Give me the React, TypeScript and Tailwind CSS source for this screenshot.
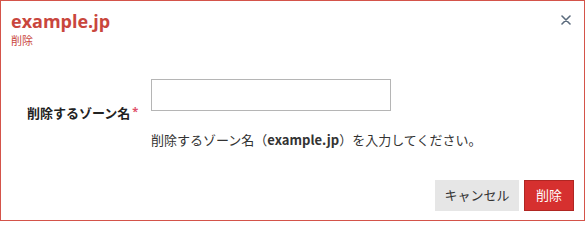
import React from "react";

export default function App() {
  const jp = { fontFamily: '"Open Sans", "Noto Sans CJK JP", sans-serif' };
  return (
    <div
      className="relative w-[585px] h-[221px] bg-white border border-[#d4544a] flex flex-col"
      style={jp}
    >
      <div className="pl-[10px] pt-[9px]">
        <div className="text-[18px] leading-[22px] font-bold text-[#c9463d]">example.jp</div>
        <div className="text-[11px] leading-[18px] text-[#c9463d]">削除</div>
      </div>
      <button className="absolute top-[13px] right-[12px] w-[12px] h-[12px] flex items-center justify-center">
        <svg width="10" height="10" viewBox="0 0 10 10">
          <path d="M1 1 L9 9 M9 1 L1 9" stroke="#5b6b7d" strokeWidth="1.6" strokeLinecap="round" />
        </svg>
      </button>
      <div className="mt-[29px] pl-[26px] flex items-center">
        <div className="w-[124px] text-[13px] font-bold text-[#222] flex items-start">
          削除するゾーン名<span className="text-[#e0506a] text-[11px] ml-[2px] -mt-[1px]">*</span>
        </div>
        <div className="flex flex-col">
          <input className="w-[240px] h-[32px] border border-[#b5b5b5] bg-white outline-none px-2 text-[13px]" />
          <div
            className="mt-[20px] text-[13px] leading-[18px] text-[#333]"
            style={{ fontFamily: '"Noto Sans CJK JP", "Open Sans", sans-serif' }}
          >
            削除するゾーン名（<span className="font-bold">example.jp</span>）を入力してください。
          </div>
        </div>
      </div>
      <div className="mt-[31px] pr-[10px] flex justify-end gap-[5px]">
        <button className="w-[84px] h-[31px] bg-[#e6e6e6] text-[13px] text-[#333]">キャンセル</button>
        <button className="w-[50px] h-[31px] bg-[#d6302f] border border-[#b02622] text-[13px] text-white">削除</button>
      </div>
    </div>
  );
}
